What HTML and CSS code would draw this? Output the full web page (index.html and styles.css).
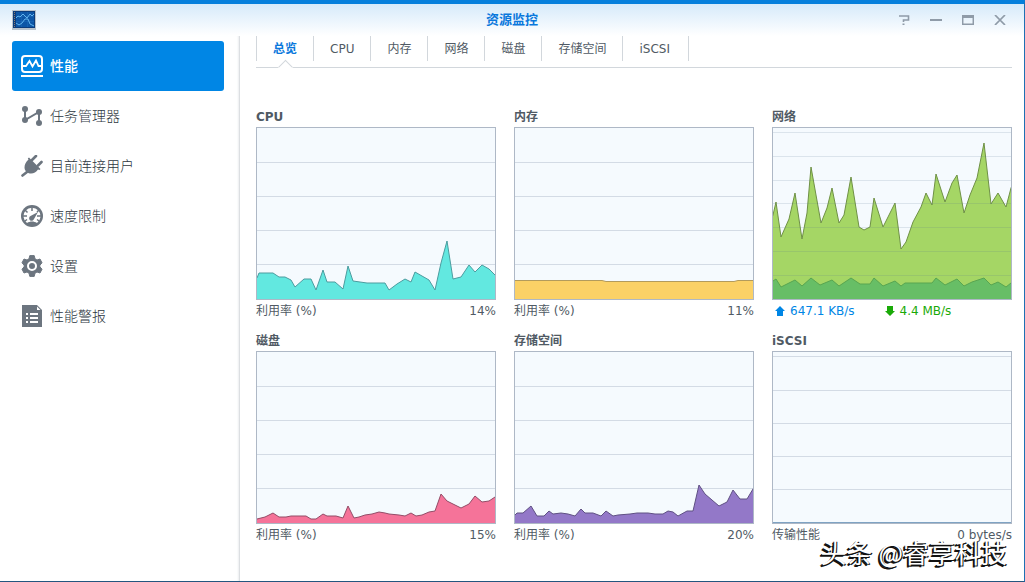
FILE: index.html
```html
<!DOCTYPE html>
<html lang="zh-CN">
<head>
<meta charset="utf-8">
<title>资源监控</title>
<link rel="stylesheet" href="styles.css">
</head>
<body>
<div class="window">
  <header class="titlebar">
    <svg class="app-icon" viewBox="0 0 24 20" aria-hidden="true">
      <rect width="24" height="20" fill="#b9c3cc"/>
      <rect x="1" y="1" width="22" height="17" fill="#0b3c7c"/>
      <rect x="4" y="2" width="18" height="15" fill="#0d56a6"/>
      <path d="M2.500 2v15" stroke="#8a7d72" stroke-dasharray="1 1"/>
      <path d="M4 6.500h18M4 11.500h18M9.500 2v15M15.500 2v15" stroke="#1d6bbb" stroke-width=".5"/>
      <path d="M4 8l2-2 2 1 3-3 4 4 3-4 2 2 2-2" fill="none" stroke="#62b5ee"/>
      <path d="M4 13l3 2 3-2 3-4 3 0 2 5 4 2" fill="none" stroke="#62b5ee"/>
    </svg>
    <h1 class="title">资源监控</h1>
    <div class="controls">
      <button class="control" aria-label="帮助"><svg viewBox="0 0 12 10"><path d="M1 1h9.500v4H5.500v2M4.500 9.200h2" stroke-width="1.600"/></svg></button>
      <button class="control" aria-label="最小化"><svg viewBox="0 0 12 10"><path d="M0 5h12"/></svg></button>
      <button class="control" aria-label="最大化"><svg viewBox="0 0 12 10"><path d="M.7 0v9.300h10.600V0" stroke-width="1.500"/><path d="M0 1.500h12" stroke-width="3"/></svg></button>
      <button class="control" aria-label="关闭"><svg viewBox="0 0 12 10"><path d="M1 0l10 10M11 0L1 10" stroke-width="1.700"/></svg></button>
    </div>
  </header>
  <div class="body">
    <nav class="sidebar">
      <a class="item active" href="#performance">
        <svg class="item-icon" viewBox="0 0 22 22"><rect x="1" y="1" width="20" height="16" rx="3" fill="none" stroke="currentColor" stroke-width="2"/><path d="M2 11h3l3.500-5 3 5.500 3.500-6 2.500 5.500H20" fill="none" stroke="currentColor" stroke-width="1.800"/><path d="M0 21h22" stroke="currentColor" stroke-width="2"/></svg>
        <span>性能</span></a>
      <a class="item" href="#tasks">
        <svg class="item-icon" viewBox="0 0 22 22"><path d="M4 4v11l14-8v11" fill="none" stroke="currentColor" stroke-width="2"/><g fill="currentColor"><circle cx="4" cy="4" r="3"/><circle cx="4" cy="15" r="3"/><circle cx="18" cy="7" r="3"/><circle cx="18" cy="18" r="3"/></g></svg>
        <span>任务管理器</span></a>
      <a class="item" href="#users">
        <svg class="item-icon" viewBox="0 0 22 22"><path d="M1.500 20.500L6 17M11 5l4-4M17 10.500L20.500 7" fill="none" stroke="currentColor" stroke-width="2.600" stroke-linecap="round"/><path d="M8 2.500L19.500 14l-1 1-1.500-.5c-2 3-5 4.500-8 4-3-.5-5.500-3-5.500-6 0-3 1.500-6 4-8L6.800 3.500z" fill="currentColor"/></svg>
        <span>目前连接用户</span></a>
      <a class="item" href="#speed">
        <svg class="item-icon" viewBox="0 0 22 22"><circle cx="11" cy="11" r="11" fill="currentColor"/><path d="M6 18a8.500 8.500 0 1 1 10 0c-3-2-7-2-10 0z" fill="#fff"/><path d="M11 2v4M4 5l2.500 2.500M2 11h4M18 5l-2 2M20 11h-4M4 16l2-1.500M18 16l-2-1.500" stroke="currentColor" stroke-width="1.500"/><path d="M17 7l-4 7a2.500 2.500 0 1 1-3.500-3z" fill="currentColor"/></svg>
        <span>速度限制</span></a>
      <a class="item" href="#settings">
        <svg class="item-icon" viewBox="0 0 22 22"><path fill="currentColor" stroke="currentColor" stroke-linejoin="round" d="M8.800 .6h4.400l.8 3.200 2 1.200 3-1 2 3.800-2.100 2.400v1.600l2.100 2.400-2 3.800-3-1-2 1.200-.8 3.200H8.800L8 18.200 6 17l-3 1-2-3.800 2.100-2.400v-1.600L1 7.800 3 4l3 1 2-1.200z"/><circle cx="11" cy="11" r="4" fill="none" stroke="#fff" stroke-width="2"/></svg>
        <span>设置</span></a>
      <a class="item" href="#alerts">
        <svg class="item-icon" viewBox="0 0 22 22"><path d="M1 0h15l5 5v17H1z" fill="currentColor"/><path d="M16 1.500V5h3.500z" fill="#fff"/><path d="M5 9h2M9 9h8M5 13h2M9 13h8M5 17h2M9 17h8" stroke="#fff" stroke-width="2"/></svg>
        <span>性能警报</span></a>
    </nav>
    <main class="main">
      <div class="tabs" role="tablist">
        <button class="tab selected" role="tab" aria-selected="true">总览</button>
        <button class="tab" role="tab">CPU</button>
        <button class="tab" role="tab">内存</button>
        <button class="tab" role="tab">网络</button>
        <button class="tab" role="tab">磁盘</button>
        <button class="tab" role="tab">存储空间</button>
        <button class="tab" role="tab">iSCSI</button>
      </div>
      <div class="charts">
        <section class="card">
          <h2 class="card-title">CPU</h2>
          <svg class="chart cpu" viewBox="0 0 238 171" preserveAspectRatio="none">
            <path class="grid" d="M0 34.500h238M0 68.500h238M0 102.500h238M0 136.500h238"/>
            <path class="area" d="M-2 173V150L0 150 2 145 16 145 22 149 28 149 34 152 38 159 47 151 54 151 59 162 66 142 70 154 78 154 86 161 91 138 96 153 103 154 110 155 128 155 132 162 140 156 148 151 154 154 158 144 165 148 172 152 178 162 184 135 190 113 196 151 204 149 212 137 218 144 225 137 232 141 238 147 240 149V173z"/>
          </svg>
          <div class="legend"><span>利用率 (%)</span><span>14%</span></div>
        </section>
        <section class="card">
          <h2 class="card-title">内存</h2>
          <svg class="chart memory" viewBox="0 0 238 171" preserveAspectRatio="none">
            <path class="grid" d="M0 34.500h238M0 68.500h238M0 102.500h238M0 136.500h238"/>
            <path class="area" d="M-2 173V152.500L87 152.500 91 153.500 219 153.500 223 152.500 240 152.500V173z"/>
          </svg>
          <div class="legend"><span>利用率 (%)</span><span>11%</span></div>
        </section>
        <section class="card">
          <h2 class="card-title">网络</h2>
          <svg class="chart network" viewBox="0 0 238 171" preserveAspectRatio="none">
            <path class="area" d="M-2 173V92L0 87 3 74 8 109 16 91 22 65 29 111 34 85 38 39 48 95 54 80 59 60 66 95 71 87 78 49 86 99 91 102 97 99 101 70 110 99 122 75 128 121 133 114 140 94 148 79 153 65 159 77 163 46 172 74 179 55 184 47 191 85 197 67 204 50 211 15 218 76 225 65 233 79 238 60 240 55V173z"/>
            <path class="area upload" d="M-2 173V155L0 153 3 151 8 159 22 152 29 158 38 150 47 157 59 152 66 158 78 150 87 156 97 156 101 150 110 158 122 153 128 158 132 155 159 155 163 150 172 157 184 151 191 158 199 154 211 150 218 157 225 154 233 159 238 155 240 154V173z"/>
            <path class="grid" d="M0 4.500h238M0 28.500h238M0 52.500h238M0 75.500h238M0 99.500h238M0 123.500h238M0 147.500h238"/>
          </svg>
          <div class="legend traffic">
            <span class="rate up"><svg class="arrow" viewBox="0 0 10 10"><path d="M5 0l5 5H8v5H2V5H0z"/></svg>647.1 KB/s</span>
            <span class="rate down"><svg class="arrow" viewBox="0 0 10 10"><path d="M5 10l5-5H8V0H2v5H0z"/></svg>4.4 MB/s</span>
          </div>
        </section>
        <section class="card">
          <h2 class="card-title">磁盘</h2>
          <svg class="chart disk" viewBox="0 0 238 171" preserveAspectRatio="none">
            <path class="grid" d="M0 34.500h238M0 68.500h238M0 102.500h238M0 136.500h238"/>
            <path class="area" d="M-2 173V167L0 167 8 165 16 161 22 165 29 165 34 164 49 164 54 167 59 167 66 162 70 164 79 164 86 166 91 154 97 166 102 165 108 163 115 162 122 160 128 161 132 162 142 163 148 164 154 161 159 164 165 163 172 160 178 159 184 142 190 149 196 152 204 156 212 152 218 144 225 150 232 149 238 145 240 144V173z"/>
          </svg>
          <div class="legend"><span>利用率 (%)</span><span>15%</span></div>
        </section>
        <section class="card">
          <h2 class="card-title">存储空间</h2>
          <svg class="chart volume" viewBox="0 0 238 171" preserveAspectRatio="none">
            <path class="grid" d="M0 34.500h238M0 68.500h238M0 102.500h238M0 136.500h238"/>
            <path class="area" d="M-2 173V165L0 163 2 161 8 161 16 154 22 164 29 164 34 159 38 162 46 161 53 162 60 164 66 157 70 161 78 161 86 164 91 159 98 164 103 163 115 162 122 161 133 161 140 162 148 162 153 159 158 160 163 164 172 159 178 159 184 133 190 142 197 148 204 154 212 150 218 138 225 147 232 147 238 137 240 134V173z"/>
          </svg>
          <div class="legend"><span>利用率 (%)</span><span>20%</span></div>
        </section>
        <section class="card">
          <h2 class="card-title">iSCSI</h2>
          <svg class="chart iscsi" viewBox="0 0 238 171" preserveAspectRatio="none">
            <path class="grid" d="M0 4.500h238M0 38.500h238M0 71.500h238M0 104.500h238M0 137.500h238"/>
            <path class="area" d="M-2 173V170.500H240V173z"/>
          </svg>
          <div class="legend"><span>传输性能</span><span>0 bytes/s</span></div>
        </section>
      </div>
    </main>
  </div>
  <div class="watermark">头条 @睿享科技</div>
</div>
</body>
</html>
```

FILE: styles.css
```css
* { box-sizing: border-box; }

body {
  margin: 0;
  background: #fff;
  color: #505a64;
  font: 12px/20px "DejaVu Sans", "Noto Sans CJK SC", sans-serif;
}

button {
  margin: 0;
  padding: 0;
  border: 0;
  background: none;
  color: inherit;
  font: inherit;
}

.window {
  position: relative;
  display: flex;
  flex-direction: column;
  min-height: 100vh;
  border-top: 4px solid #057fdc;
  border-right: 1px solid #1e70b4;
  border-bottom: 1px solid #24567f;
}

.titlebar {
  display: grid;
  grid-template-columns: 1fr auto 1fr;
  align-items: center;
  height: 32px;
  padding: 0 8px;
  background: linear-gradient(#d6eafa, #fff);
}

.app-icon { width: 24px; height: 20px; margin-left: 4px; }

.title {
  margin: 0;
  color: #0a78dc;
  font-size: 13px;
  line-height: 20px;
}

.controls { display: flex; justify-content: flex-end; }

.control {
  display: flex;
  align-items: center;
  justify-content: center;
  width: 32px;
  height: 32px;
}

.control svg {
  width: 12px;
  height: 10px;
  fill: none;
  stroke: #8f9ba8;
  stroke-width: 2;
}

.body { display: flex; flex: 1; }

.sidebar {
  flex: 0 0 240px;
  padding: 5px 15px 0 12px;
  border-right: 1px solid #dcdfe2;
  box-shadow: inset -2px 0 2px -1px #eceef0;
}

.item {
  display: flex;
  align-items: center;
  gap: 7px;
  height: 50px;
  padding-left: 9px;
  border-radius: 3px;
  color: #2c3640;
  font-size: 14px;
  font-weight: 300;
  text-decoration: none;
}

.item-icon { width: 22px; height: 22px; color: #6c757f; }

.item.active { background: #0086e5; color: #fff; font-weight: 500; }
.item.active .item-icon { color: #fff; }

.main { flex: 1; min-width: 0; padding: 0 12px 24px 16px; }

.tabs {
  display: flex;
  height: 32px;
  padding-bottom: 6px;
  border-bottom: 1px solid #d2d7dc;
}

.tab {
  position: relative;
  padding: 0 16px;
  border-left: 1px solid #d2d7dc;
}

.tab:last-child { padding-right: 18px; border-right: 1px solid #d2d7dc; }

.selected { color: #0a78dc; font-weight: 700; }

.selected::after {
  content: "";
  position: absolute;
  left: 50%;
  bottom: -12px;
  width: 9px;
  height: 9px;
  margin-left: -5px;
  border: 1px solid #d2d7dc;
  border-color: #d2d7dc transparent transparent #d2d7dc;
  background: #fff;
  transform: rotate(45deg);
}

.charts {
  display: grid;
  grid-template-columns: repeat(3, minmax(0, 1fr));
  gap: 9px 18px;
  padding-top: 39px;
}

.card-title { margin: 0; font-size: 12px; line-height: 20px; }

.chart {
  display: block;
  width: 100%;
  height: 173px;
  border: 1px solid #aeb8c6;
  background: #f5fafe;
}

.grid { fill: none; stroke: #d3dbe5; vector-effect: non-scaling-stroke; }
.area { vector-effect: non-scaling-stroke; }

.cpu .area { fill: #62e8e0; stroke: #4c9c9f; }
.memory .area { fill: #fbd166; stroke: #b39b5c; }
.network .area { fill: #a5d665; stroke: #6f9146; }
.network .upload { fill: #67be66; stroke: #58a550; }
.network .grid { stroke: #5a788c; stroke-opacity: .16; }
.disk .area { fill: #f57399; stroke: #934c67; }
.volume .area { fill: #9378c8; stroke: #5f5083; }
.iscsi .area { fill: #8bb8dd; stroke: #7fa3c3; }

.legend {
  display: flex;
  justify-content: space-between;
  line-height: 22px;
}

.traffic { justify-content: flex-start; gap: 30px; padding-left: 3px; }
.rate { display: flex; align-items: center; gap: 5px; }
.arrow { width: 10px; height: 10px; fill: currentColor; }
.up { color: #0086e5; }
.down { color: #1aaa08; }

.watermark {
  position: absolute;
  right: 17px;
  bottom: 11px;
  color: #fff;
  font: 400 26px/36px "Noto Sans CJK SC", sans-serif;
  text-shadow: -1px 1px 0 #111, -2px 2px 0 #111, 1px 1px 0 #111;
  white-space: nowrap;
}
```
